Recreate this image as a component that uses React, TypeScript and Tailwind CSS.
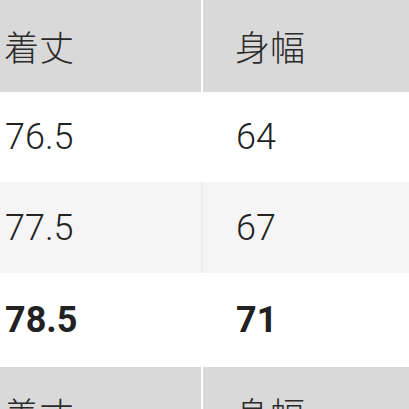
import React from "react";

const rows = [
  { a: "76.5", b: "64", bg: "bg-white", line: "border-white", bold: false, h: "h-[90px]" },
  { a: "77.5", b: "67", bg: "bg-[#f5f5f5]", line: "border-[#ebebeb]", bold: false, h: "h-[91px]" },
  { a: "78.5", b: "71", bg: "bg-white", line: "border-white", bold: true, h: "h-[94px]" },
];

const Header = ({ h }: { h: string }) => (
  <div className={`flex ${h} bg-[#d9d9d9]`}>
    <div className="w-[203px] flex items-center pl-[4px] border-r-2 border-white text-[35px] font-light text-[#2a2a2a] [font-family:'Noto_Sans_CJK_JP',sans-serif]">
      着丈
    </div>
    <div className="flex-1 flex items-center pl-[32px] text-[35px] font-light text-[#2a2a2a] [font-family:'Noto_Sans_CJK_JP',sans-serif]">
      身幅
    </div>
  </div>
);

export default function App() {
  return (
    <div className="w-[409px] h-[409px] overflow-hidden bg-white [font-family:Roboto,sans-serif]">
      <Header h="h-[92px]" />
      {rows.map((r) => (
        <div key={r.a} className={`flex ${r.h} ${r.bg}`}>
          <div
            className={`w-[203px] flex items-center pl-[5px] border-r-2 ${r.line} text-[36px] text-[#222] ${
              r.bold ? "font-bold" : "font-light"
            }`}
          >
            {r.a}
          </div>
          <div
            className={`flex-1 flex items-center pl-[33px] text-[36px] text-[#222] ${
              r.bold ? "font-bold" : "font-light"
            }`}
          >
            {r.b}
          </div>
        </div>
      ))}
      <Header h="h-[92px]" />
    </div>
  );
}
